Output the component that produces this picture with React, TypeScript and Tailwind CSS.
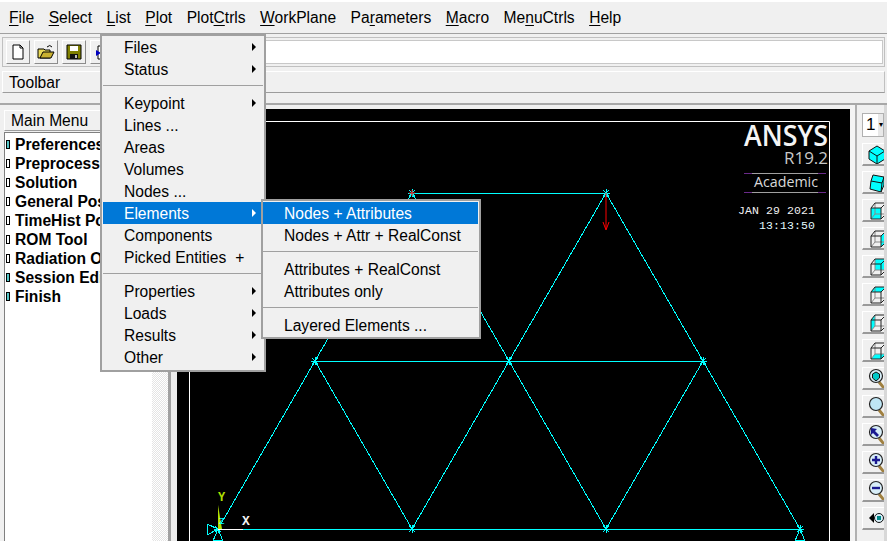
import React from "react";

const menuBar: [string, string, string][] = [
  ["", "F", "ile"],
  ["", "S", "elect"],
  ["", "L", "ist"],
  ["", "P", "lot"],
  ["Plot", "C", "trls"],
  ["", "W", "orkPlane"],
  ["Pa", "r", "ameters"],
  ["", "M", "acro"],
  ["Me", "n", "uCtrls"],
  ["", "H", "elp"],
];

const tree = ["Preferences", "Preprocessor", "Solution", "General Postproc", "TimeHist Postpro", "ROM Tool", "Radiation Opt", "Session Editor", "Finish"];

function Item({ label, arrow, active, plus }: { label: string; arrow?: boolean; active?: boolean; plus?: boolean }) {
  return (
    <div className={`relative flex h-[22px] items-center pl-[21px] pt-[2px] ${active ? "bg-[#0078d7] text-white" : "text-black"}`}>
      {label}
      {plus && <span className="ml-[9px]">+</span>}
      {arrow && <span className={`absolute right-[7px] top-[7px] h-0 w-0 border-y-[4px] border-l-[4px] border-y-transparent ${active ? "border-l-white" : "border-l-black"}`} />}
    </div>
  );
}

function Sep() {
  return (
    <div className="flex h-[12px] items-start pt-[5px]">
      <div className="h-[1px] w-full bg-[#a0a0a0]" />
    </div>
  );
}

function Cube({ face }: { face?: string }) {
  return (
    <svg width="22" height="24" viewBox="0 0 22 24" className="block shrink-0">
      {face === "front" && <path d="M3 10h10v11H3z" fill="#00ffff" />}
      {face === "back" && <path d="M7 5h10v11H7z" fill="#00ffff" />}
      {face === "right" && <path d="M13 10l5-5v11l-5 5z" fill="#00ffff" />}
      {face === "top" && <path d="M3 10l4-5h11l-5 5z" fill="#00ffff" />}
      {face === "left" && <path d="M3 10l4-5v11l-4 5z" fill="#00ffff" />}
      {face === "bottom" && <path d="M3 21l4-5h11l-5 5z" fill="#00ffff" />}
      <path d="M7 5v11h11M7 16l-4 5" fill="none" stroke="#888" strokeWidth="1" />
      <path d="M3 10h10v11H3zM3 10l4-5h11v11l-5 5M13 10l5-5" fill="none" stroke="#222" strokeWidth="1" />
    </svg>
  );
}

function Lens({ kind }: { kind: string }) {
  return (
    <svg width="20" height="24" viewBox="0 0 20 24" className="block shrink-0">
      <path d="M11 16l5 6" stroke="#a08040" strokeWidth="3" />
      <circle cx="8" cy="10" r="6.500" fill={kind === "plain" ? "#bfe6f5" : "#d8eef8"} stroke="#222" strokeWidth="1.200" />
      {kind === "iso" && <path d="M4.500 8l3.500-2 3.500 2v4l-3.500 3-3.500-3z" fill="#00c8c8" stroke="#111" />}
      {kind === "plus" && <path d="M8 6v8M4 10h8" stroke="#1a1a90" strokeWidth="2.400" />}
      {kind === "minus" && <path d="M4 10h8" stroke="#1a1a90" strokeWidth="2.400" />}
      {kind === "back" && <path d="M3 6l6 1-2 2 4 4-2 2-4-4-2 2z" fill="#1a1a90" />}
    </svg>
  );
}

function SideBtn({ children }: { children: React.ReactNode }) {
  return (
    <div className="flex h-[23px] w-[22px] items-center justify-start overflow-hidden border-t border-l border-t-white border-l-white border-b-2 border-b-[#9a9a9a] bg-[#f0f0f0] pl-[5px]">
      {children}
    </div>
  );
}

function ToolBtn({ children }: { children: React.ReactNode }) {
  return (
    <div className="flex h-[24px] w-[24px] items-center justify-center border border-t-white border-l-white border-r-[#8c8c8c] border-b-[#8c8c8c] bg-[#f0f0f0]">
      {children}
    </div>
  );
}

function Node({ x, y }: { x: number; y: number }) {
  return <path d={`M${x - 4} ${y}h8M${x} ${y - 4}v8M${x - 3} ${y - 3}l6 6M${x + 3} ${y - 3}l-6 6`} stroke="#00ffff" strokeWidth="1" shapeRendering="crispEdges" />;
}

const nodes = [
  [412, 193], [606, 193], [315, 361], [509, 361], [703, 361], [218, 529], [412, 529], [606, 529], [800, 529],
];

export default function App() {
  return (
    <div className="relative flex h-[541px] w-[887px] flex-col overflow-hidden bg-[#f0f0f0] font-['Liberation_Sans',Arial,sans-serif] text-[15.6px] text-black">
      {/* menu bar */}
      <div className="flex h-[34px] shrink-0 items-center gap-[14.5px] border-t-2 border-b border-t-white border-b-[#a0a0a0] pl-[9px] pt-[1px]">
        {menuBar.map(([a, b, c]) => (
          <span key={a + b + c}>
            {a}
            <span className="underline underline-offset-2">{b}</span>
            {c}
          </span>
        ))}
      </div>

      {/* toolbar */}
      <div className="mx-[2px] mt-[3px] flex h-[30px] shrink-0 items-center gap-[4px] border border-[#c0c0c0] pl-[3px]">
        <ToolBtn>
          <svg width="16" height="18" viewBox="0 0 16 18">
            <path d="M3 2h7l3 3v11H3z" fill="#fff" stroke="#000" />
            <path d="M10 2v3h3" fill="none" stroke="#000" />
          </svg>
        </ToolBtn>
        <ToolBtn>
          <svg width="18" height="18" viewBox="0 0 18 18">
            <path d="M1 6h6l1 1h5v8H1z" fill="#e8d858" stroke="#000" />
            <path d="M3 15l3-6h11l-3 6z" fill="#c8b030" stroke="#000" />
            <path d="M10 4q3-3 5 0" fill="none" stroke="#000" />
          </svg>
        </ToolBtn>
        <ToolBtn>
          <svg width="16" height="16" viewBox="0 0 16 16">
            <path d="M1 1h14v14H1z" fill="#808000" stroke="#000" />
            <path d="M4 2h8v5H4z" fill="#fff" />
            <path d="M4 10h8v5H4z" fill="#111" />
            <path d="M9 11h2v3H9z" fill="#c0c0c0" />
          </svg>
        </ToolBtn>
        <ToolBtn>
          <svg width="16" height="16" viewBox="0 0 16 16">
            <path d="M4 2h7v13H4z" fill="#fff" stroke="#000" />
            <path d="M2 6l5 3-5 3z" fill="#0000c0" />
          </svg>
        </ToolBtn>
        <div className="ml-[2px] mr-[1px] h-[24px] flex-1 border border-[#c8c8c8] bg-white" />
      </div>

      <div className="mx-[2px] mt-[4px] flex h-[22px] shrink-0 items-center border border-t-white border-l-white border-b-[#9c9c9c] border-r-[#c0c0c0] pl-[6px] pt-[2px]">
        Toolbar
      </div>

      {/* main area */}
      <div className="mt-[10px] flex min-h-0 flex-1 border-t-2 border-t-[#a8a8a8]">
        {/* left panel */}
        <div className="flex w-[152px] shrink-0 flex-col pl-[4px] pt-[5px]">
          <div className="h-[21px] border border-t-white border-l-white border-b-[#9c9c9c] border-r-[#9c9c9c] pl-[6px] leading-[19px]">Main Menu</div>
          <div className="mt-[1px] min-h-0 flex-1 border-l border-t border-[#808080] bg-white pl-[1px] pt-[2px]">
            {tree.map((t, i) => (
              <div key={t} className="flex h-[19px] items-center gap-[5px] overflow-hidden whitespace-nowrap font-bold">
                <span className={`h-[9px] w-[4px] shrink-0 border border-black ${i === 0 || i >= 7 ? "bg-[#58c8c8]" : "bg-white"}`} />
                {t}
              </div>
            ))}
          </div>
        </div>
        <div className="w-[16px] shrink-0 bg-[repeating-conic-gradient(#ffffff_0_25%,#e4e4e4_0_50%)] bg-[length:2px_2px]" />
        <div className="w-[3px] shrink-0 bg-[#a0a0a0]" />
        <div className="w-[6px] shrink-0 bg-[#ececec]" />

        {/* graphics window */}
        <div className="min-w-0 flex-1 pt-[4px]">
          <div className="h-full bg-black">
            <svg width="673" height="432" viewBox="177 109 673 432" className="block">
              <path d="M189.500 541V121.500H829.500V541" fill="none" stroke="#fff" />
              <g stroke="#00ffff" strokeWidth="1" fill="none" shapeRendering="crispEdges">
                <path d="M218 529L412 193H606L800 529H218" />
                <path d="M412 193L606 529M606 193L412 529M315 361H703M315 361L412 529M703 361L606 529" />
                <path d="M207 524l11 5-11 6zM218 529l-5 12M218 529l5 12M213 540h10" />
                <path d="M800 529l-5 12M800 529l5 12M795 540h10" />
              </g>
              {nodes.map(([x, y]) => (
                <Node key={`${x}-${y}`} x={x} y={y} />
              ))}
              <path d="M218 529.500H243" stroke="#fff" shapeRendering="crispEdges" />
              <path d="M218 505v24h4z" fill="#b0e000" />
              <path d="M606 193v36M603 222l3 8 3-8" stroke="#ff0000" fill="none" />
              <path d="M409 193h6M412 190v6" stroke="#ff0000" />
              <text x="218" y="501" fill="#b0e000" fontSize="12" fontWeight="700" fontFamily="'Liberation Mono', monospace">Y</text>
              <text x="219" y="524" fill="#00ffff" fontSize="9" fontFamily="'Liberation Mono', monospace">Z</text>
              <text x="242" y="525" fill="#f4f4f4" fontSize="13" fontWeight="700" fontFamily="'Liberation Mono', monospace">X</text>
              <text x="744" y="146" fill="#f4f4f4" fontSize="29" fontWeight="600" fontFamily="'Open Sans', sans-serif" textLength="84" lengthAdjust="spacingAndGlyphs">ANSYS</text>
              <text x="784" y="164" fill="#c8c8c8" fontSize="17" fontFamily="'Open Sans', sans-serif" textLength="44" lengthAdjust="spacingAndGlyphs">R19.2</text>
              <path d="M744 173.500h82M744 192.500h82" stroke="#6a2a8a" />
              <path d="M752 173.500h66M752 192.500h66" stroke="#a0a0a0" />
              <text x="754" y="187" fill="#d8d8d8" fontSize="14" fontFamily="'Open Sans', sans-serif" textLength="64" lengthAdjust="spacingAndGlyphs">Academic</text>
              <text x="738" y="214" fill="#f0f0f0" fontSize="11.500" fontFamily="'Liberation Mono', monospace" textLength="77">JAN 29 2021</text>
              <text x="759" y="229" fill="#e0fbff" fontSize="11.500" fontFamily="'Liberation Mono', monospace" textLength="56">13:13:50</text>
            </svg>
          </div>
        </div>

        {/* right toolbar */}
        <div className="flex w-[37px] shrink-0">
          <div className="w-[5px] bg-[#f4f4f4]" />
          <div className="w-[2px] bg-[#b0b0b0]" />
          <div className="flex w-[27px] flex-col gap-[5px] pl-[5px] pt-[8px]">
            <div className="mb-[1px] flex h-[24px] w-[22px] items-center overflow-hidden border border-[#b0b0b0] bg-white pl-[3px] text-[17px]">
              1<span className="ml-[3px] flex h-[22px] flex-1 items-center justify-center bg-[#e8e8e8] text-[8px]">▾</span>
            </div>
            <SideBtn>
              <svg width="22" height="24" viewBox="0 0 22 24" className="block shrink-0">
                <path d="M1 9l8-5 8 5v8l-8 5-8-5z" fill="#00ffff" stroke="#111" />
                <path d="M1 9l8 5 8-5M9 14v8" fill="none" stroke="#111" />
              </svg>
            </SideBtn>
            <SideBtn>
              <svg width="22" height="24" viewBox="0 0 22 24" className="block shrink-0">
                <path d="M5 5l11 2v8l-3 7-11-3 1-8z" fill="#00ffff" stroke="#111" />
                <path d="M3 11l11 2-1 9M14 13l2-6" fill="none" stroke="#111" />
              </svg>
            </SideBtn>
            <SideBtn><Cube face="front" /></SideBtn>
            <SideBtn><Cube face="right" /></SideBtn>
            <SideBtn><Cube face="back" /></SideBtn>
            <SideBtn><Cube face="top" /></SideBtn>
            <SideBtn><Cube face="left" /></SideBtn>
            <SideBtn><Cube face="bottom" /></SideBtn>
            <SideBtn><Lens kind="iso" /></SideBtn>
            <SideBtn><Lens kind="plain" /></SideBtn>
            <SideBtn><Lens kind="back" /></SideBtn>
            <SideBtn><Lens kind="plus" /></SideBtn>
            <SideBtn><Lens kind="minus" /></SideBtn>
            <SideBtn>
              <svg width="22" height="24" viewBox="0 0 22 24" className="block shrink-0">
                <path d="M1 12l5-5v10z" fill="#000" />
                <circle cx="11" cy="12" r="4.500" fill="#d8eef8" stroke="#111" />
                <path d="M9 10h4v4H9z" fill="#008888" />
              </svg>
            </SideBtn>
          </div>
          <div className="flex-1 bg-[#d8d8d8]" />
        </div>
      </div>

      {/* List dropdown */}
      <div className="absolute left-[100px] top-[34px] h-[338px] w-[166px] border-2 border-[#a0a0a0] bg-[#f0f0f0] px-[1px]">
        <Item label="Files" arrow />
        <Item label="Status" arrow />
        <Sep />
        <Item label="Keypoint" arrow />
        <Item label="Lines ..." />
        <Item label="Areas" />
        <Item label="Volumes" />
        <Item label="Nodes ..." />
        <Item label="Elements" arrow active />
        <Item label="Components" />
        <Item label="Picked Entities" plus />
        <Sep />
        <Item label="Properties" arrow />
        <Item label="Loads" arrow />
        <Item label="Results" arrow />
        <Item label="Other" arrow />
      </div>

      {/* Elements submenu */}
      <div className="absolute left-[261px] top-[199px] h-[140px] w-[220px] border-2 border-[#a0a0a0] bg-[#f0f0f0] pr-[1px] pt-[1px]">
        <Item label="Nodes + Attributes" active />
        <Item label="Nodes + Attr + RealConst" />
        <Sep />
        <Item label="Attributes + RealConst" />
        <Item label="Attributes only" />
        <Sep />
        <Item label="Layered Elements ..." />
      </div>
    </div>
  );
}
